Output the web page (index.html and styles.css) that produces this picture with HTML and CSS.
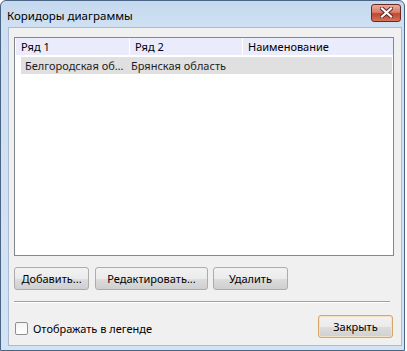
FILE: index.html
```html
<!DOCTYPE html>
<html lang="ru">
<head>
    <meta charset="UTF-8">
    <title>Коридоры диаграммы</title>
    <link rel="stylesheet" href="styles.css">
</head>
<body>
    <div class="window">
        <div class="titlebar">
            <span class="title">Коридоры диаграммы</span>
            <button class="close-x" title="Закрыть">
                <svg width="13" height="11" viewBox="0 0 13 11">
                    <path d="M2 1.5 L11 9.5 M11 1.5 L2 9.5" stroke="#5a2320" stroke-width="4" stroke-linecap="square"/>
                    <path d="M2 1.5 L11 9.5 M11 1.5 L2 9.5" stroke="#ffffff" stroke-width="2.2" stroke-linecap="square"/>
                </svg>
            </button>
        </div>
        <div class="client">
            <div class="list">
                <div class="list-header">
                    <div class="hcol c1">Ряд 1</div>
                    <div class="hcol c2">Ряд 2</div>
                    <div class="hcol c3">Наименование</div>
                </div>
                <div class="list-row">
                    <div class="cell c1">Белгородская об…</div>
                    <div class="cell c2">Брянская область</div>
                    <div class="cell c3"></div>
                </div>
            </div>

            <div class="actions">
                <button class="btn btn-add">Добавить...</button>
                <button class="btn btn-edit">Редактировать...</button>
                <button class="btn btn-del">Удалить</button>
            </div>

            <div class="separator"></div>

            <div class="footer">
                <label class="check">
                    <span class="box"></span>
                    Отображать в легенде
                </label>
                <button class="btn btn-close">Закрыть</button>
            </div>
        </div>
    </div>
</body>
</html>
```

FILE: styles.css
```css
/* Окно диалога в стиле Windows 7 */
body {
    margin: 0;
    background-color: #ffffff;
    font-family: "Segoe UI", "Noto Sans", sans-serif;
    font-size: 11px;
    color: #000;
}
.window {
    width: 403px;
    height: 349px;
    border: 1px solid #4a6584;
    border-radius: 6px 6px 0 0;
    background: linear-gradient(to bottom, #c4d8ee 0, #cfe0f2 24px, #d4e3f4 100%);
    display: flex;
    flex-direction: column;
}
.titlebar {
    height: 26px;
    display: flex;
    align-items: center;
    justify-content: space-between;
    padding: 0 3px 0 6px;
}
.title {
    font-size: 11.5px;
    color: #000;
    margin-top: 2px;
}
.close-x {
    width: 30px;
    height: 18px;
    margin-top: -3px;
    padding: 0;
    border: 1px solid #6a2a24;
    border-radius: 3px;
    background: linear-gradient(to bottom, #e9a99a 0, #d7806d 45%, #c1452f 55%, #d5735b 100%);
    display: flex;
    align-items: center;
    justify-content: center;
}
.client {
    flex: 1;
    margin: 0 2px 4px 7px;
    border: 1px solid #a9bcd4;
    background-color: #f0f0f0;
    display: flex;
    flex-direction: column;
}

/* Список */
.list {
    width: 378px;
    height: 217px;
    margin: 9px 0 0 5px;
    border: 1px solid #828790;
    background-color: #ffffff;
}
.list-header {
    display: flex;
    height: 17px;
    margin-left: 1px;
    background-color: #eaebfb;
}
.hcol {
    line-height: 17px;
    padding-left: 5px;
    border-right: 1px solid #ffffff;
    box-sizing: border-box;
}
.hcol.c1 { width: 114px; }
.hcol.c2 { width: 113px; }
.hcol.c3 { flex: 1; border-right: none; }

.list-row {
    display: flex;
    height: 17px;
    margin: 2px 1px 0 6px;
    background-color: #e0e0e0;
    color: #1e1e1e;
}
.cell {
    line-height: 17px;
    padding-left: 4px;
    box-sizing: border-box;
    white-space: nowrap;
}
.cell.c1 { width: 106px; }
.cell.c2 { width: 114px; }
.cell.c3 { flex: 1; }

/* Кнопки */
.actions {
    display: flex;
    gap: 6px;
    margin: 11px 0 0 5px;
}
.btn {
    height: 23px;
    padding: 0;
    font-family: inherit;
    font-size: 11px;
    color: #000;
    border: 1px solid #acacac;
    border-radius: 3px;
    background: linear-gradient(to bottom, #f2f2f2 0, #ebebeb 50%, #dddddd 51%, #cfcfcf 100%);
}
.btn-add { width: 75px; }
.btn-edit { width: 113px; margin-right: -1px; }
.btn-del { width: 75px; }

.separator {
    width: 376px;
    height: 1px;
    margin: 11px 0 0 5px;
    background-color: #a0a0a0;
    border-bottom: 1px solid #ffffff;
}

.footer {
    display: flex;
    align-items: center;
    justify-content: space-between;
    margin: 12px 8px 0 6px;
}
.check {
    display: flex;
    align-items: center;
    gap: 5px;
    margin-top: 4px;
}
.box {
    width: 11px;
    height: 11px;
    border: 1px solid #8f8f8f;
    border-radius: 2px;
    background: linear-gradient(to bottom, #f4f4f4, #ffffff);
}
.btn-close {
    width: 75px;
    border-color: #d9a467;
    box-shadow: inset 0 0 0 1px #f5e1c4;
}
```
